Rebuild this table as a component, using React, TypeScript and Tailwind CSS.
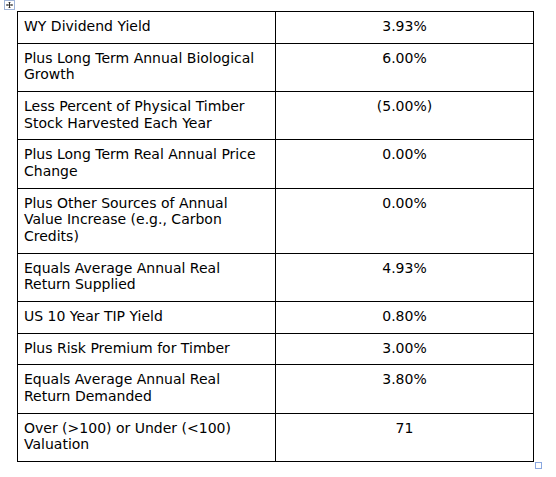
const rows: [string, string][] = [
  ['WY Dividend Yield', '3.93%'],
  ['Plus Long Term Annual Biological Growth', '6.00%'],
  ['Less Percent of Physical Timber Stock Harvested Each Year', '(5.00%)'],
  ['Plus Long Term Real Annual Price Change', '0.00%'],
  ['Plus Other Sources of Annual Value Increase (e.g., Carbon Credits)', '0.00%'],
  ['Equals Average Annual Real Return Supplied', '4.93%'],
  ['US 10 Year TIP Yield', '0.80%'],
  ['Plus Risk Premium for Timber', '3.00%'],
  ['Equals Average Annual Real Return Demanded', '3.80%'],
  ['Over (>100) or Under (<100) Valuation', '71'],
]

function MoveHandle() {
  return (
    <svg width="11" height="10" viewBox="0 0 11 10" className="absolute left-[4px] top-0">
      <rect x="0.5" y="0.5" width="10" height="9" fill="#fff" stroke="#9fb4d8" />
      <path d="M5.5 2v6M2.5 5h6" stroke="#333" strokeWidth="1" />
      <path d="M4.5 3l1-1 1 1M4.5 7l1 1 1-1M3.5 4l-1 1 1 1M7.5 4l1 1-1 1" stroke="#333" strokeWidth="0.8" fill="none" />
    </svg>
  )
}

export default function App() {
  return (
    <div className="relative w-[556px] h-[477px] bg-white" style={{ fontFamily: '"DejaVu Sans", Verdana, sans-serif' }}>
      <MoveHandle />
      <div className="pt-[11px] pl-[17px]">
        <table className="w-[517px] table-fixed border-collapse text-[14px] leading-[16.67px] text-black">
          <tbody>
            {rows.map(([label, value]) => (
              <tr key={label}>
                <td className="w-1/2 border border-black pl-[6px] pr-[8px] pt-[6px] pb-[8px] align-top text-left">
                  {label}
                </td>
                <td className="w-1/2 border border-black px-[6px] pt-[6px] pb-[8px] align-top text-center">
                  {value}
                </td>
              </tr>
            ))}
          </tbody>
        </table>
      </div>
      <div className="absolute left-[535px] top-[462px] w-[7px] h-[7px] border border-[#8aa8e0]" />
    </div>
  )
}
